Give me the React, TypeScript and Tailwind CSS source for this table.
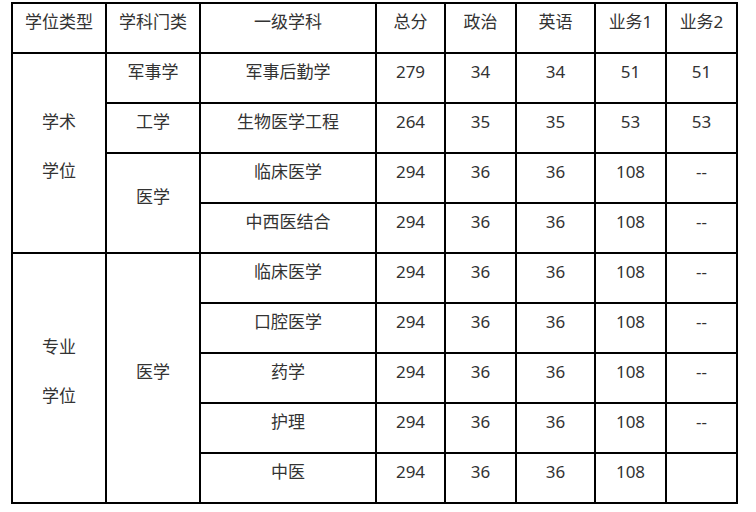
const rows1 = [
  { name: "军事后勤学", total: "279", pol: "34", eng: "34", b1: "51", b2: "51" },
  { name: "生物医学工程", total: "264", pol: "35", eng: "35", b1: "53", b2: "53" },
  { name: "临床医学", total: "294", pol: "36", eng: "36", b1: "108", b2: "--" },
  { name: "中西医结合", total: "294", pol: "36", eng: "36", b1: "108", b2: "--" },
];

const rows2 = [
  { name: "临床医学", total: "294", pol: "36", eng: "36", b1: "108", b2: "--" },
  { name: "口腔医学", total: "294", pol: "36", eng: "36", b1: "108", b2: "--" },
  { name: "药学", total: "294", pol: "36", eng: "36", b1: "108", b2: "--" },
  { name: "护理", total: "294", pol: "36", eng: "36", b1: "108", b2: "--" },
  { name: "中医", total: "294", pol: "36", eng: "36", b1: "108", b2: "" },
];

const td = "border-2 border-black h-[50px] text-center align-middle pb-[13px] p-0";

function Cells({ r }: { r: (typeof rows1)[number] }) {
  return (
    <>
      <td className={td}>{r.name}</td>
      <td className={td}>{r.total}</td>
      <td className={td}>{r.pol}</td>
      <td className={td}>{r.eng}</td>
      <td className={td}>{r.b1}</td>
      <td className={td + " border-l-[1px]"}>{r.b2}</td>
    </>
  );
}

export default function App() {
  const heads = ["学位类型", "学科门类", "一级学科", "总分", "政治", "英语", "业务1", "业务2"];
  return (
    <div className="w-[756px] h-[512px] bg-white pl-[11px] pt-[2px] text-[#333] text-[17px] leading-[24px] font-['Noto_Sans','Noto_Sans_CJK_SC',sans-serif]">
      <table className="border-collapse table-fixed w-[727px]">
        <colgroup>
          <col className="w-[94px]" />
          <col className="w-[94px]" />
          <col className="w-[176px]" />
          <col className="w-[69px]" />
          <col className="w-[71px]" />
          <col className="w-[79px]" />
          <col className="w-[71px]" />
          <col className="w-[71px]" />
        </colgroup>
        <tbody>
          <tr>
            {heads.map((h, i) => (
              <td key={h} className={td + (i === 7 ? " border-l-[1px]" : "")}>
                {h}
              </td>
            ))}
          </tr>
          <tr>
            <td rowSpan={4} className={td}>
              <div>学术</div>
              <div className="mt-[25px]">学位</div>
            </td>
            <td className={td}>军事学</td>
            <Cells r={rows1[0]} />
          </tr>
          <tr>
            <td className={td}>工学</td>
            <Cells r={rows1[1]} />
          </tr>
          <tr>
            <td rowSpan={2} className={td}>医学</td>
            <Cells r={rows1[2]} />
          </tr>
          <tr>
            <Cells r={rows1[3]} />
          </tr>
          {rows2.map((r, i) => (
            <tr key={i}>
              {i === 0 && (
                <>
                  <td rowSpan={5} className={td}>
                    <div>专业</div>
                    <div className="mt-[25px]">学位</div>
                  </td>
                  <td rowSpan={5} className={td}>医学</td>
                </>
              )}
              <Cells r={r} />
            </tr>
          ))}
        </tbody>
      </table>
    </div>
  );
}
